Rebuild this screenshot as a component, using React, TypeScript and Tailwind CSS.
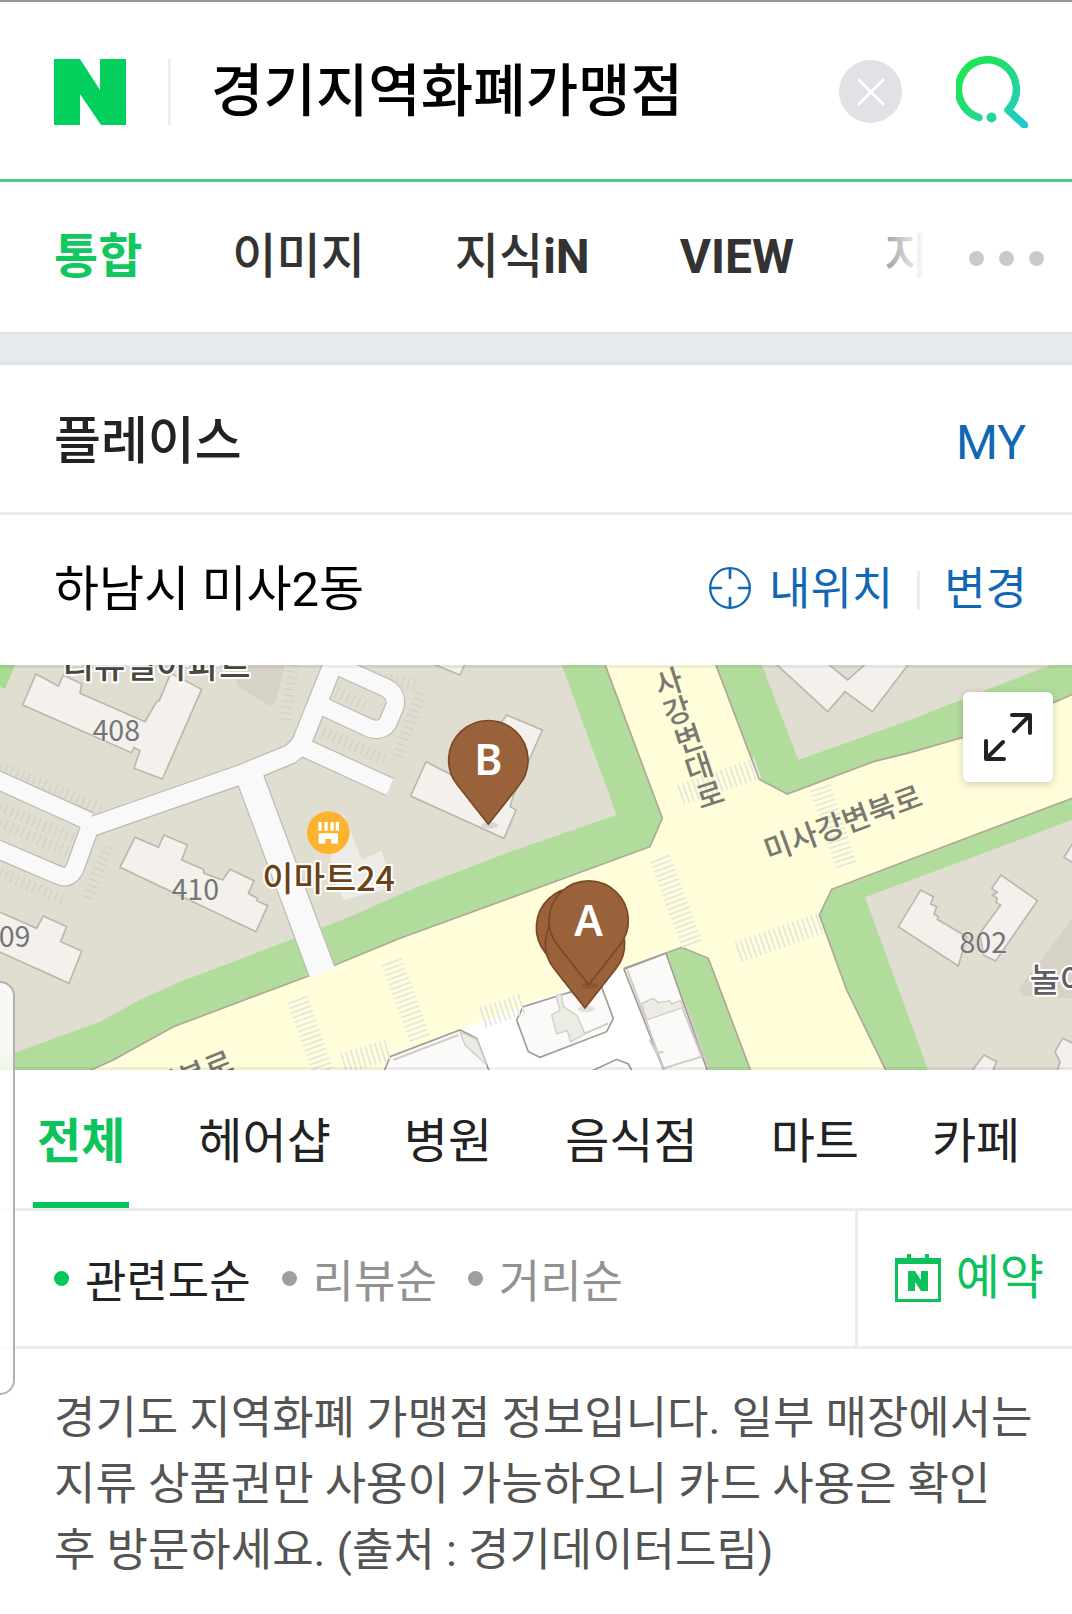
import React, { useState } from 'react';
import clsx from 'clsx';

const searchTabs = [
  { id: 'all', label: '통합' },
  { id: 'image', label: '이미지' },
  { id: 'kin', label: '지식', latin: 'iN' },
  { id: 'view', label: '', latin: 'VIEW' },
  { id: 'map', label: '지도' },
];

const categories = ['전체', '헤어샵', '병원', '음식점', '마트', '카페'];

const sortOptions = ['관련도순', '리뷰순', '거리순'];

function NaverLogo() {
  return (
    <svg viewBox="0 0 72 66" className="h-[66px] w-[72px]" aria-hidden="true">
      <path d="M0 0h26l20 31V0h26v66H47L26 35v31H0z" fill="#03cf5d" />
    </svg>
  );
}

function SearchIcon() {
  return (
    <svg viewBox="0 0 72 72" className="size-[72px]" fill="none" aria-hidden="true">
      <defs>
        <linearGradient id="search-stroke" x1="8" y1="12" x2="70" y2="70" gradientUnits="userSpaceOnUse">
          <stop offset="0" stopColor="#1de655" />
          <stop offset="0.25" stopColor="#1fde68" />
          <stop offset="0.65" stopColor="#26d3a5" />
          <stop offset="1" stopColor="#1fc8d4" />
        </linearGradient>
      </defs>
      <path
        d="M23 61.500A29 29.500 0 1 1 52 54L68.500 69"
        stroke="url(#search-stroke)"
        strokeWidth="7.500"
        strokeLinecap="round"
        strokeLinejoin="round"
      />
      <circle cx="35.500" cy="61.500" r="5" fill="#24d59c" />
    </svg>
  );
}

function TargetIcon() {
  return (
    <svg viewBox="0 0 42 42" className="mb-1 size-[42px]" fill="none" stroke="currentColor" aria-hidden="true">
      <circle cx="21" cy="21" r="19.800" strokeWidth="2.300" />
      <path d="M21 2v9M21 31v9M2 21h10M30 21h10" strokeWidth="2.700" strokeLinecap="round" />
    </svg>
  );
}

function BookingIcon() {
  return (
    <svg viewBox="0 0 46 48" className="h-12 w-[46px]" fill="none" aria-hidden="true">
      <path d="M12 0h4v5h-4zM30 0h4v5h-4z" fill="currentColor" />
      <path d="M1.500 6h43v40.500h-43z" stroke="currentColor" strokeWidth="3" />
      <path d="M0 4h46v6H0z" fill="currentColor" />
      <path d="M13 17h7l6 9v-9h7v20h-7l-6-9v9h-7z" fill="currentColor" />
    </svg>
  );
}

function ExpandIcon() {
  return (
    <svg viewBox="0 0 90 90" className="size-[90px]" fill="none" stroke="#222" strokeWidth="4" strokeLinecap="round" strokeLinejoin="round" aria-hidden="true">
      <path d="M49 23h18v18M66 24L51 39M23 49v18h18M24 66l16-16" />
    </svg>
  );
}

function Pin({ x, y, letter }: { x: number; y: number; letter?: string }) {
  return (
    <g transform={`translate(${x} ${y})`}>
      <ellipse cx="4" cy="196" rx="26" ry="10" fill="#000" opacity="0.1" />
      <path
        d="M0 193L-92 76A119 119 0 1 1 92 76Z"
        fill="#99623a"
        stroke="#7a4826"
        strokeWidth="5"
        strokeLinejoin="round"
      />
      {letter && (
        <text y="46" textAnchor="middle" fontSize="128" fontWeight="600" fill="#fff" className="font-['Noto_Sans',sans-serif]">
          {letter}
        </text>
      )}
    </g>
  );
}

const lanes = [
  'M-20 354L268 484',
  'M268 505L226 622Q208 662 174 645L-20 562',
  'M950 130L1110 205Q1150 216 1165 185L1185 138Q1192 100 1155 82L1000 12',
  'M895 255L1170 381',
];

const parking = [
  'M0 318L310 452',
  'M0 440L232 540',
  'M0 488L215 580',
  'M0 640L200 725',
  'M325 560L260 722',
  'M880 15L855 190',
  'M1262 100L1190 300',
  'M1010 95L1100 140',
  'M970 215L1160 300',
  'M1100 45L1245 75',
];

const crossings = [
  'M892 1018L970 1235',
  'M1175 905L1262 1142',
  'M1448 1072L1570 1032',
  'M1030 1210L1165 1170',
  'M1980 595L2080 862',
  'M2042 405L2278 322',
  'M2462 382L2538 615',
  'M2215 877L2462 790',
];

function PlaceMap() {
  return (
    <svg
      viewBox="0 15 3216 1215"
      preserveAspectRatio="xMidYMid slice"
      className="block h-[405px] w-full font-['Noto_Sans_CJK_KR',sans-serif]"
      role="img"
      aria-label="지도"
    >
      <rect width="3216" height="1240" fill="#fffdda" />

      {/* Blocks around the crossing */}
      <g stroke="#aca89b" strokeWidth="5" fill="#b1dc9c">
        <path d="M-10 0H1810L1987 475L1950 560L1570 700L1200 835L1005 915L920 950L640 1055L520 1100L340 1200L250 1240H-10Z" />
        <path d="M2142 0L2278 358L2362 402L2620 305L2730 278L2890 232L3160 128L3230 98V0Z" />
        <path d="M3230 410L2910 530L2495 688L2458 765L2540 990L2662 1240H3230Z" />
      </g>
      <g fill="#e0ddd1">
        <path d="M-10 0H1680L1850 465L1530 575L1230 690L1050 770L870 840L700 905L540 965L420 1020L300 1085L150 1140L-10 1198Z" />
        <path d="M2280 0L2395 300L2730 180L3190 0Z" />
        <path d="M3230 474L3030 550L2595 712L2788 1240H3230Z" />
      </g>
      <path d="M0 0H52L15 86L0 80Z" fill="#a5dc91" />
      <path d="M690 0L715 80L805 135Q822 140 830 115L860 0Z" fill="#d6d2c6" />
      <path d="M3230 755L3058 985Q3060 1012 3090 1010L3230 1015Z" fill="#d6d2c6" />

      {/* Southern block */}
      <path d="M1160 1195L1380 1108L1550 1045L1875 922L2045 862L2125 895L2255 1240H1160Z" fill="#fff" />
      <path d="M2000 880L2045 862L2125 895L2160 985L2255 1240H2128Z" fill="#b1dc9c" />
      <path d="M1872 925L2045 862L2125 895L2255 1240" fill="none" stroke="#aca89b" strokeWidth="5" />
      <g fill="#fbfaf8" stroke="#9f9c98" strokeWidth="5">
        <path d="M1872 928L1998 880L2125 1240H1995Z" />
        <path d="M1550 1080L1570 1040L1800 968L1840 1075L1820 1115L1620 1192L1585 1175Z" />
        <path d="M1150 1240L1170 1190L1380 1110L1430 1135L1470 1240Z" />
        <path d="M1760 1240L1850 1198L1885 1212L1900 1240Z" />
      </g>
      <g fill="#ecebe4" stroke="#d0cdc7" strokeWidth="4">
        <path d="M1925 1030L1960 1015L1975 1028L2010 1022L2015 1032L2042 1022L2050 1042L1940 1080Z" />
        <path d="M1668 1008L1684 1002L1690 1040L1732 1068L1755 1122L1712 1145L1702 1112L1670 1122L1655 1065L1680 1050Z" />
        <path d="M1380 1115L1430 1138L1460 1215L1395 1155Z" />
      </g>
      <path d="M1882 930L1992 1228M2048 1045L2105 1190L1990 1225M1948 1138L1970 1180L1990 1175M1180 1200L1375 1125M2060 1035L2128 1228M1755 1120L1825 1090" fill="none" stroke="#d0cdc7" strokeWidth="6" />

      {/* Parking rows */}
      {parking.map((d) => (
        <path key={d} d={d} fill="none" stroke="#d3d0c5" strokeWidth="34" strokeDasharray="4 14" />
      ))}

      {/* Lanes inside the apartment block */}
      <g fill="none" stroke="#bcb9b3">
        {lanes.map((d) => (
          <path key={d} d={d} strokeWidth="59" />
        ))}
        <path d="M275 500L725 343L870 283Q902 262 912 230L1004 0" strokeWidth="63" />
        <path d="M745 340L965 932" strokeWidth="86" />
      </g>
      <g fill="none" stroke="#f9f9fa">
        {lanes.map((d) => (
          <path key={d} d={d} strokeWidth="52" />
        ))}
        <path d="M262 504L725 343L870 283Q902 262 912 230L1004 0" strokeWidth="56" />
        <path d="M742 332L967 938" strokeWidth="79" />
      </g>

      {crossings.map((d) => (
        <path key={d} d={d} fill="none" stroke="#e5e5df" strokeWidth="64" strokeDasharray="5 10" />
      ))}

      {/* Buildings */}
      <g fill="#f4f1ed" stroke="#bbb7b0" strokeWidth="5">
        <path d="M108 42L175 78L190 45L245 72L240 100L435 185L470 125L478 122L512 40L605 88L487 357L402 325L420 272L402 262L395 278L68 135Z" />
        <path d="M405 532L475 562L492 525L562 555L545 600L610 628L612 640L668 660L690 628L762 662L745 700L773 715L770 722L803 737L768 815L360 622Z" />
        <path d="M-10 752L110 805L130 768L200 800L182 845L245 873L207 970L-10 872Z" />
        <path d="M1278 305L1380 358L1520 165L1627 210L1540 408L1530 440L1548 450L1512 535L1232 408Z" />
        <path d="M1270 0L1380 45L1400 0Z" />
        <path d="M2315 0L2483 155L2535 95L2617 155L2735 0H2610L2543 60L2470 0Z" />
        <path d="M2762 690L2800 710L2792 732L2810 740L2802 762L2815 770L2812 778L2900 830L2875 918L2695 800Z" />
        <path d="M3003 645L3112 722L2987 903L2950 885L2940 820L3002 735L2988 728L2992 715L2978 705L2992 697L2975 685Z" />
        <path d="M3230 530L3192 592L3230 615Z" />
        <path d="M2910 1240L2952 1185L2990 1205L2975 1240Z" />
        <path d="M3170 1240L3180 1205L3165 1175L3188 1135L3230 1155V1240Z" />
      </g>
      <path d="M1030 460L1085 600L1145 572L1160 625L1150 690L1030 720L990 600Z" fill="#efece7" />

      {/* Map labels */}
      <g fill="#747577" fontSize="86" textAnchor="middle" stroke="#f4f1ed" strokeWidth="3" paintOrder="stroke">
        <text x="349" y="243">408</text>
        <text x="586" y="720">410</text>
        <text x="20" y="862">409</text>
        <text x="2950" y="879">802</text>
      </g>
      <g fill="#7a7870" fontSize="90" fontWeight="500" textAnchor="middle">
        <text transform="translate(2540 520) rotate(-20)">미사강변북로</text>
        <text transform="translate(2016 98) rotate(-18)">사</text>
        <text transform="translate(2042 184) rotate(-18)">강</text>
        <text transform="translate(2076 268) rotate(-18)">변</text>
        <text transform="translate(2107 352) rotate(-18)">대</text>
        <text transform="translate(2140 436) rotate(-18)">로</text>
        <text transform="translate(592 1276) rotate(-22)">변북로</text>
      </g>
      <g fontWeight="500" stroke="#fff" strokeWidth="12" strokeLinejoin="round" paintOrder="stroke">
        <text x="470" y="54" textAnchor="middle" fontSize="102" fill="#4a4640">리슈빌아파트</text>
        <text x="986" y="694" textAnchor="middle" fontSize="102" fill="#6b4216">이마트24</text>
        <text x="3089" y="996" fontSize="98" fill="#5f6062">놀이터</text>
      </g>

      {/* Convenience store marker */}
      <circle cx="985" cy="518" r="64" fill="#fdb32f" />
      <path d="M955 486h10v26h-10zM973 486h10v26h-10zM991 486h10v26h-10zM1007 486h10v26h-10zM956 520h58v31h-20v-14h-18v14h-20z" fill="#fff" />

      <Pin x={1465} y={300} letter="B" />
      <Pin x={1728} y={802} />
      <Pin x={1755} y={851} />
      <Pin x={1766} y={781} letter="A" />

      <path d="M0 15h3216v9H0zM0 1221h3216v9H0z" fill="#000" opacity="0.06" />
    </svg>
  );
}

export default function App() {
  const [query, setQuery] = useState('경기지역화폐가맹점');
  const [activeTab, setActiveTab] = useState('all');
  const [category, setCategory] = useState('전체');
  const [sort, setSort] = useState('관련도순');

  return (
    <div className="relative min-h-screen overflow-hidden border-t-2 border-[#949494] bg-white font-['Roboto','Noto_Sans_CJK_KR',sans-serif] text-[#222]">
      {/* Search bar */}
      <form
        className="flex h-[180px] items-center border-b-3 border-[#53c78d] pt-[2px] pr-11 pl-[54px]"
        onSubmit={(e) => e.preventDefault()}
      >
        <a href="#home" aria-label="NAVER">
          <NaverLogo />
        </a>
        <div className="ml-[42px] h-[66px] w-[3px] bg-[#eceef1]" />
        <input
          type="text"
          aria-label="검색어"
          value={query}
          onChange={(e) => setQuery(e.target.value)}
          className="ml-10 h-[84px] min-w-0 flex-1 text-[57px] font-medium text-black outline-none"
        />
        <button
          type="button"
          aria-label="지우기"
          onClick={() => setQuery('')}
          className="flex size-[63px] items-center justify-center rounded-full bg-[#e1e2e6]"
        >
          <svg viewBox="0 0 28 28" className="size-7" stroke="#fff" strokeWidth="3" strokeLinecap="round" aria-hidden="true">
            <path d="M2 2l24 24M26 2L2 26" />
          </svg>
        </button>
        <button type="submit" aria-label="검색" className="ml-[54px]">
          <SearchIcon />
        </button>
      </form>

      {/* Search tabs */}
      <div className="flex h-[150px] items-center">
        <nav className="relative flex min-w-0 flex-1 gap-[90px] overflow-hidden pl-[54px]">
          {searchTabs.map((tab) => (
            <button
              key={tab.id}
              onClick={() => setActiveTab(tab.id)}
              className={clsx(
                'shrink-0 text-5xl leading-[72px] whitespace-nowrap',
                activeTab === tab.id ? 'font-bold text-[#12c75f]' : 'font-medium text-[#333]'
              )}
            >
              {tab.label}
              {tab.latin && <span className="font-bold">{tab.latin}</span>}
            </button>
          ))}
          <div className="pointer-events-none absolute inset-y-0 right-0 w-[60px] bg-linear-to-r from-white/30 to-white" />
        </nav>
        <button aria-label="더보기" className="mr-7 ml-11 flex gap-[15px] pt-[2px]">
          <span className="size-[15px] rounded-full bg-[#c8c9cb]" />
          <span className="size-[15px] rounded-full bg-[#c8c9cb]" />
          <span className="size-[15px] rounded-full bg-[#c8c9cb]" />
        </button>
      </div>

      <div className="h-[33px] border-y-3 border-[#dfe3e6] bg-[#e7ebee]" />

      {/* Place */}
      <section>
        <div className="flex h-[150px] items-center justify-between border-b-3 border-[#e9edf0] pt-2 pr-[46px] pl-[54px]">
          <h2 className="text-[51px] font-medium">플레이스</h2>
          <a href="#my" className="text-5xl text-[#1067b4]">
            MY
          </a>
        </div>

        <div className="flex h-[150px] items-center pr-[45px] pl-[54px]">
          <span className="flex-1 text-[49px] text-black">하남시 미사2동</span>
          <button className="flex items-center gap-[18px] text-[45px] text-[#1067b4]">
            <TargetIcon />
            내위치
          </button>
          <div className="mx-6 h-[39px] w-[3px] bg-[#ececec]" />
          <button className="text-[45px] text-[#1067b4]">변경</button>
        </div>

        <div className="relative">
          <PlaceMap />
          <button
            aria-label="지도 크게 보기"
            className="absolute top-[27px] right-[19px] rounded-md bg-white shadow-[0_2px_8px_rgba(0,0,0,0.2)]"
          >
            <ExpandIcon />
          </button>
        </div>

        {/* Categories */}
        <nav className="flex h-[141px] gap-[65px] border-b-3 border-[#e9edf0] pl-[33px]">
          {categories.map((item) => (
            <button
              key={item}
              onClick={() => setCategory(item)}
              className={clsx(
                'shrink-0 border-b-6 px-1 pt-3 text-5xl leading-[72px]',
                category === item ? 'border-[#03c75a] font-bold text-[#0dc45c]' : 'border-transparent'
              )}
            >
              {item}
            </button>
          ))}
        </nav>

        {/* Sorting */}
        <div className="flex h-[138px] border-b-3 border-[#e9edf0]">
          <div className="flex flex-1 items-center gap-[31px] pl-[54px]">
            {sortOptions.map((option) => (
              <button
                key={option}
                onClick={() => setSort(option)}
                className={clsx(
                  'flex items-center gap-4 text-[45px]',
                  sort === option ? 'text-[#222]' : 'text-[#929292]'
                )}
              >
                <span
                  className={clsx(
                    'size-[15px] rounded-full',
                    sort === option ? 'bg-[#03c75a]' : 'bg-[#9e9e9e]'
                  )}
                />
                <span className="pt-2">{option}</span>
              </button>
            ))}
          </div>
          <a
            href="#booking"
            className="flex items-center gap-[15px] border-l-3 border-[#e9edf0] pr-7 pb-[2px] pl-[37px] text-5xl text-[#0dc15c]"
          >
            <BookingIcon />
            예약
          </a>
        </div>

        <p className="pt-[37px] pr-9 pb-[30px] pl-[54px] text-[45px] leading-[66px] break-keep text-[#545454]">
          경기도 지역화폐 가맹점 정보입니다. 일부 매장에서는 지류 상품권만 사용이 가능하오니 카드 사용은 확인 후 방문하세요. (출처 : 경기데이터드림)
        </p>
      </section>

      {/* Edge panel handle */}
      <div className="absolute top-[979px] left-0 h-[414px] w-[15px] rounded-r-2xl border-2 border-l-0 border-[#b0b0b0] bg-white/80" />
    </div>
  );
}
